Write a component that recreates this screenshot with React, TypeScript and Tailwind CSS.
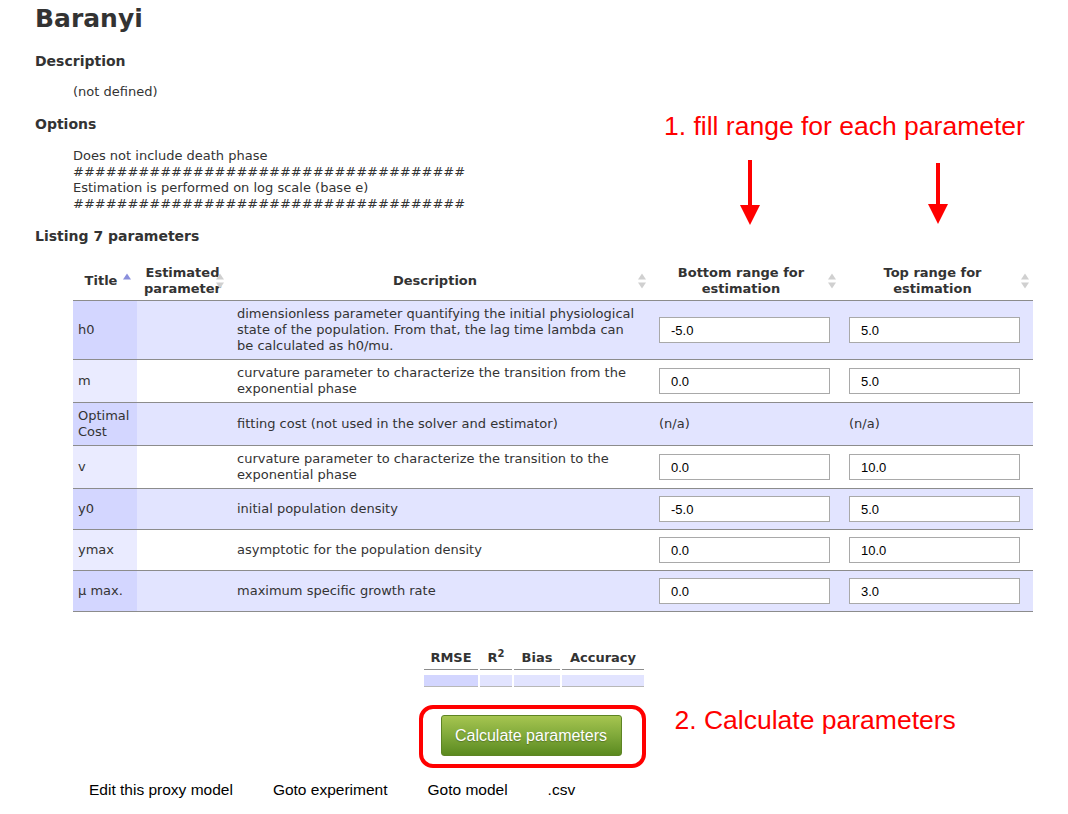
import React from 'react';

const params = [
  { title: 'h0', desc: 'dimensionless parameter quantifying the initial physiological state of the population. From that, the lag time lambda can be calculated as h0/mu.', min: '-5.0', max: '5.0' },
  { title: 'm', desc: 'curvature parameter to characterize the transition from the exponential phase', min: '0.0', max: '5.0' },
  { title: 'Optimal Cost', desc: 'fitting cost (not used in the solver and estimator)', min: null, max: null },
  { title: 'v', desc: 'curvature parameter to characterize the transition to the exponential phase', min: '0.0', max: '10.0' },
  { title: 'y0', desc: 'initial population density', min: '-5.0', max: '5.0' },
  { title: 'ymax', desc: 'asymptotic for the population density', min: '0.0', max: '10.0' },
  { title: 'μ max.', desc: 'maximum specific growth rate', min: '0.0', max: '3.0' },
];

const hashes = '#'.repeat(36);

const SortBoth = () => (
  <svg width="8" height="19" viewBox="0 0 8 19" className="absolute right-[4px] top-1/2 -translate-y-1/2">
    <polygon points="0,8 4,2 8,8" fill="#d0d0d0" />
    <polygon points="0,11 4,17 8,11" fill="#d0d0d0" />
  </svg>
);

const SortAsc = () => (
  <svg width="8" height="19" viewBox="0 0 8 19" className="absolute right-[6px] top-1/2 -translate-y-1/2">
    <polygon points="0,8 4,2 8,8" fill="#8a8fdc" />
  </svg>
);

const RangeInput = ({ value }: { value: string }) => (
  <input
    readOnly
    value={value}
    className="block w-[171px] h-[26px] my-[2px] border border-[#a9a9a9] bg-white pl-[11px] text-[13px] text-black font-['Liberation_Sans',Arial,sans-serif] outline-none"
  />
);

const App: React.FC = () => {
  return (
    <div className="relative w-[1068px] min-h-[814px] bg-white text-[#333] font-['DejaVu_Sans',Verdana,sans-serif] text-[13px] leading-[16px]">
      <div className="pl-[35px] pt-[4px]">
        <h1 className="text-[25px] leading-[30px] font-bold">Baranyi</h1>
        <h3 className="mt-[17px] text-[14px] leading-[20px] font-bold">Description</h3>
        <p className="mt-[13px] pl-[38px]">(not defined)</p>
        <h3 className="mt-[14px] text-[14px] leading-[20px] font-bold">Options</h3>
        <div className="mt-[14px] pl-[38px]">
          <div>Does not include death phase</div>
          <div>{hashes}</div>
          <div>Estimation is performed on log scale (base e)</div>
          <div>{hashes}</div>
        </div>
        <h3 className="mt-[14px] text-[14px] leading-[20px] font-bold">Listing 7 parameters</h3>
      </div>

      <table className="mt-[16px] ml-[73px] w-[960px] table-fixed border-collapse">
        <colgroup>
          <col className="w-[64px]" />
          <col className="w-[91px]" />
          <col className="w-[422px]" />
          <col className="w-[190px]" />
          <col className="w-[193px]" />
        </colgroup>
        <thead>
          <tr className="border-b border-[#8c8c8c]">
            <th className="relative pl-[10px] pr-[18px] py-[3px] font-bold text-center">Title<SortAsc /></th>
            <th className="relative pl-[6px] pr-[6px] py-[3px] font-bold text-center">Estimated parameter<SortBoth /></th>
            <th className="relative pl-[10px] pr-[18px] py-[3px] font-bold text-center">Description<SortBoth /></th>
            <th className="relative pl-[10px] pr-[18px] py-[3px] font-bold text-center">Bottom range for estimation<SortBoth /></th>
            <th className="relative pl-[10px] pr-[18px] py-[3px] font-bold text-center">Top range for estimation<SortBoth /></th>
          </tr>
        </thead>
        <tbody>
          {params.map((p, i) => {
            const odd = i % 2 === 0;
            return (
              <tr key={p.title} className={`border-b border-[#8c8c8c] ${odd ? 'bg-[#e2e4ff]' : 'bg-white'}`}>
                <td className={`px-[5px] py-[5px] align-middle ${odd ? 'bg-[#d3d6ff]' : 'bg-[#eaebff]'}`}>{p.title}</td>
                <td className="px-[10px] py-[5px]"></td>
                <td className="pl-[9px] pr-[8px] py-[5px] align-middle">{p.desc}</td>
                <td className="pl-[9px] py-[5px] align-middle">{p.min ? <RangeInput value={p.min} /> : '(n/a)'}</td>
                <td className="pl-[9px] py-[5px] align-middle">{p.max ? <RangeInput value={p.max} /> : '(n/a)'}</td>
              </tr>
            );
          })}
        </tbody>
      </table>

      <table className="mx-auto mt-[30px] border-separate [border-spacing:2px_5px]">
        <thead>
          <tr>
            <th className="w-[54px] px-[4px] py-[3px] font-bold border-b border-[#8c8c8c]">RMSE</th>
            <th className="w-[32px] px-[4px] py-[3px] font-bold border-b border-[#8c8c8c]">
              R<sup className="text-[10px]">2</sup>
            </th>
            <th className="w-[46px] px-[4px] py-[3px] font-bold border-b border-[#8c8c8c]">Bias</th>
            <th className="w-[82px] px-[4px] py-[3px] font-bold border-b border-[#8c8c8c]">Accuracy</th>
          </tr>
        </thead>
        <tbody>
          <tr>
            <td className="h-[12px] bg-[#d3d6ff] border-b border-[#b8b8b8]"></td>
            <td className="h-[12px] bg-[#e2e4ff] border-b border-[#b8b8b8]"></td>
            <td className="h-[12px] bg-[#e2e4ff] border-b border-[#b8b8b8]"></td>
            <td className="h-[12px] bg-[#e2e4ff] border-b border-[#b8b8b8]"></td>
          </tr>
        </tbody>
      </table>

      <div className="relative mx-auto mt-[23px] w-fit -translate-x-[3px]">
        <button className="w-[181px] h-[41px] rounded-[3px] border border-[#5d8424] bg-gradient-to-b from-[#a6c550] via-[#80a93a] to-[#5b8a1f] text-white text-[16px] font-['Liberation_Sans',Arial,sans-serif] [text-shadow:0_1px_1px_rgba(0,0,0,0.25)]">
          Calculate parameters
        </button>
        <div className="absolute -left-[22px] -right-[24px] -top-[10px] -bottom-[12px] rounded-[14px] border-[4px] border-[#ff0000]" />
        <div className="absolute left-[234px] top-[-10px] whitespace-nowrap text-[26.5px] leading-[30px] text-[#ff0000] font-['Liberation_Sans',Arial,sans-serif]">
          2. Calculate parameters
        </div>
      </div>

      <div className="mt-[25px] pl-[89px] flex gap-[40px] text-[15.5px] leading-[18px] text-black font-['Liberation_Sans',Arial,sans-serif]">
        <span>Edit this proxy model</span>
        <span>Goto experiment</span>
        <span>Goto model</span>
        <span>.csv</span>
      </div>

      <div className="absolute left-[664px] top-[111px] whitespace-nowrap text-[26.5px] leading-[30px] text-[#ff0000] font-['Liberation_Sans',Arial,sans-serif]">
        1. fill range for each parameter
      </div>
      <svg className="absolute left-[738px] top-[158px]" width="24" height="70" viewBox="0 0 24 70">
        <rect x="10" y="2" width="4" height="48" fill="#ff0000" />
        <polygon points="2,47 22,47 12,67" fill="#ff0000" />
      </svg>
      <svg className="absolute left-[926px] top-[161px]" width="24" height="66" viewBox="0 0 24 66">
        <rect x="10" y="2" width="4" height="44" fill="#ff0000" />
        <polygon points="2,43 22,43 12,63" fill="#ff0000" />
      </svg>
    </div>
  );
};

export default App;
